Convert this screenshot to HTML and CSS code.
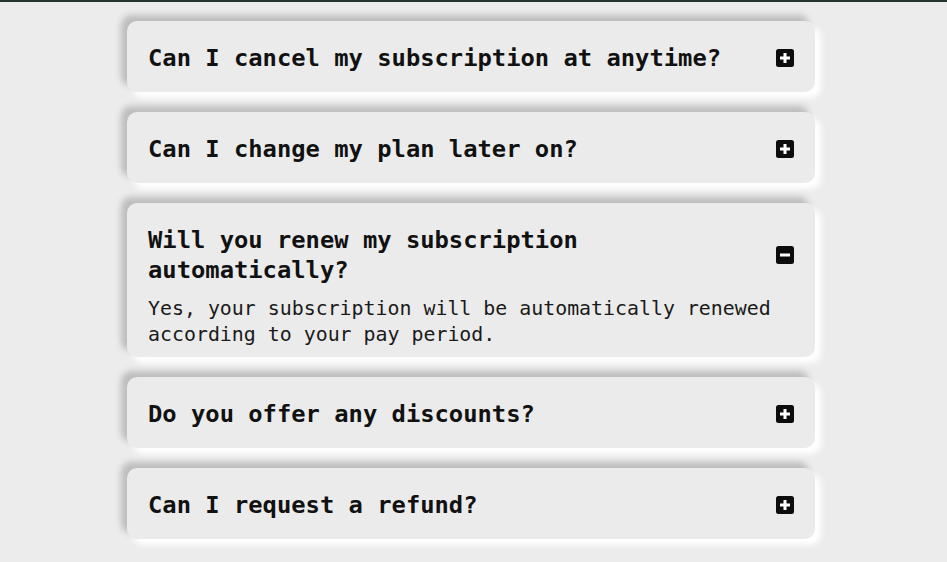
FILE: index.html
```html
<!DOCTYPE html>
<html lang="en">
<head>
<meta charset="utf-8">
<title>FAQ</title>
<link rel="stylesheet" href="styles.css">
</head>
<body>
<div class="topbar"></div>
<main class="faq">
  <section class="item">
    <div class="row">
      <h2 class="q">Can I cancel my subscription at anytime?</h2>
      <span class="icon"><svg viewBox="0 0 18 18" width="18" height="18"><rect x="0" y="0" width="18" height="18" rx="2.5" fill="#0c0c0c"/><rect x="4" y="7.5" width="10" height="3" fill="#fff"/><rect x="7.5" y="4" width="3" height="10" fill="#fff"/></svg></span>
    </div>
  </section>
  <section class="item">
    <div class="row">
      <h2 class="q">Can I change my plan later on?</h2>
      <span class="icon"><svg viewBox="0 0 18 18" width="18" height="18"><rect x="0" y="0" width="18" height="18" rx="2.5" fill="#0c0c0c"/><rect x="4" y="7.5" width="10" height="3" fill="#fff"/><rect x="7.5" y="4" width="3" height="10" fill="#fff"/></svg></span>
    </div>
  </section>
  <section class="item open">
    <div class="row">
      <h2 class="q">Will you renew my subscription automatically?</h2>
      <span class="icon"><svg viewBox="0 0 18 18" width="18" height="18"><rect x="0" y="0" width="18" height="18" rx="2.5" fill="#0c0c0c"/><rect x="4" y="7.5" width="10" height="3" fill="#fff"/></svg></span>
    </div>
    <p class="a">Yes, your subscription will be automatically renewed according to your pay period.</p>
  </section>
  <section class="item">
    <div class="row">
      <h2 class="q">Do you offer any discounts?</h2>
      <span class="icon"><svg viewBox="0 0 18 18" width="18" height="18"><rect x="0" y="0" width="18" height="18" rx="2.5" fill="#0c0c0c"/><rect x="4" y="7.5" width="10" height="3" fill="#fff"/><rect x="7.5" y="4" width="3" height="10" fill="#fff"/></svg></span>
    </div>
  </section>
  <section class="item">
    <div class="row">
      <h2 class="q">Can I request a refund?</h2>
      <span class="icon"><svg viewBox="0 0 18 18" width="18" height="18"><rect x="0" y="0" width="18" height="18" rx="2.5" fill="#0c0c0c"/><rect x="4" y="7.5" width="10" height="3" fill="#fff"/><rect x="7.5" y="4" width="3" height="10" fill="#fff"/></svg></span>
    </div>
  </section>
</main>
</body>
</html>
```

FILE: styles.css
```css
html, body {
  margin: 0;
  padding: 0;
  background: #ececec;
}
body {
  font-family: "DejaVu Sans Mono", "Liberation Mono", monospace;
  color: #111;
  overflow: hidden;
}
.topbar {
  height: 2px;
  background: #263230;
}
.faq {
  width: 688px;
  padding-right: 5px;
  margin: 0 auto;
  padding-top: 19px;
  padding-bottom: 24px;
  display: flex;
  flex-direction: column;
  gap: 20px;
}
.item {
  background: #ebebeb;
  border-radius: 10px;
  box-shadow: -6px -6px 6px #bdbdbd, 6px 6px 6px #ffffff;
  padding: 22px 21px 19px 21px;
}
.item.open {
  padding-bottom: 9px;
}
.row {
  display: flex;
  align-items: center;
  justify-content: space-between;
  gap: 24px;
}
.q {
  margin: 0;
  font-size: 23.8px;
  line-height: 30px;
  font-weight: bold;
  color: #111;
  letter-spacing: 0;
}
.icon {
  flex: none;
  width: 18px;
  height: 18px;
  display: flex;
}
.a {
  margin: 11px 0 0 0;
  font-size: 19.9px;
  line-height: 26px;
  font-weight: normal;
  color: #1a1a1a;
}
```
